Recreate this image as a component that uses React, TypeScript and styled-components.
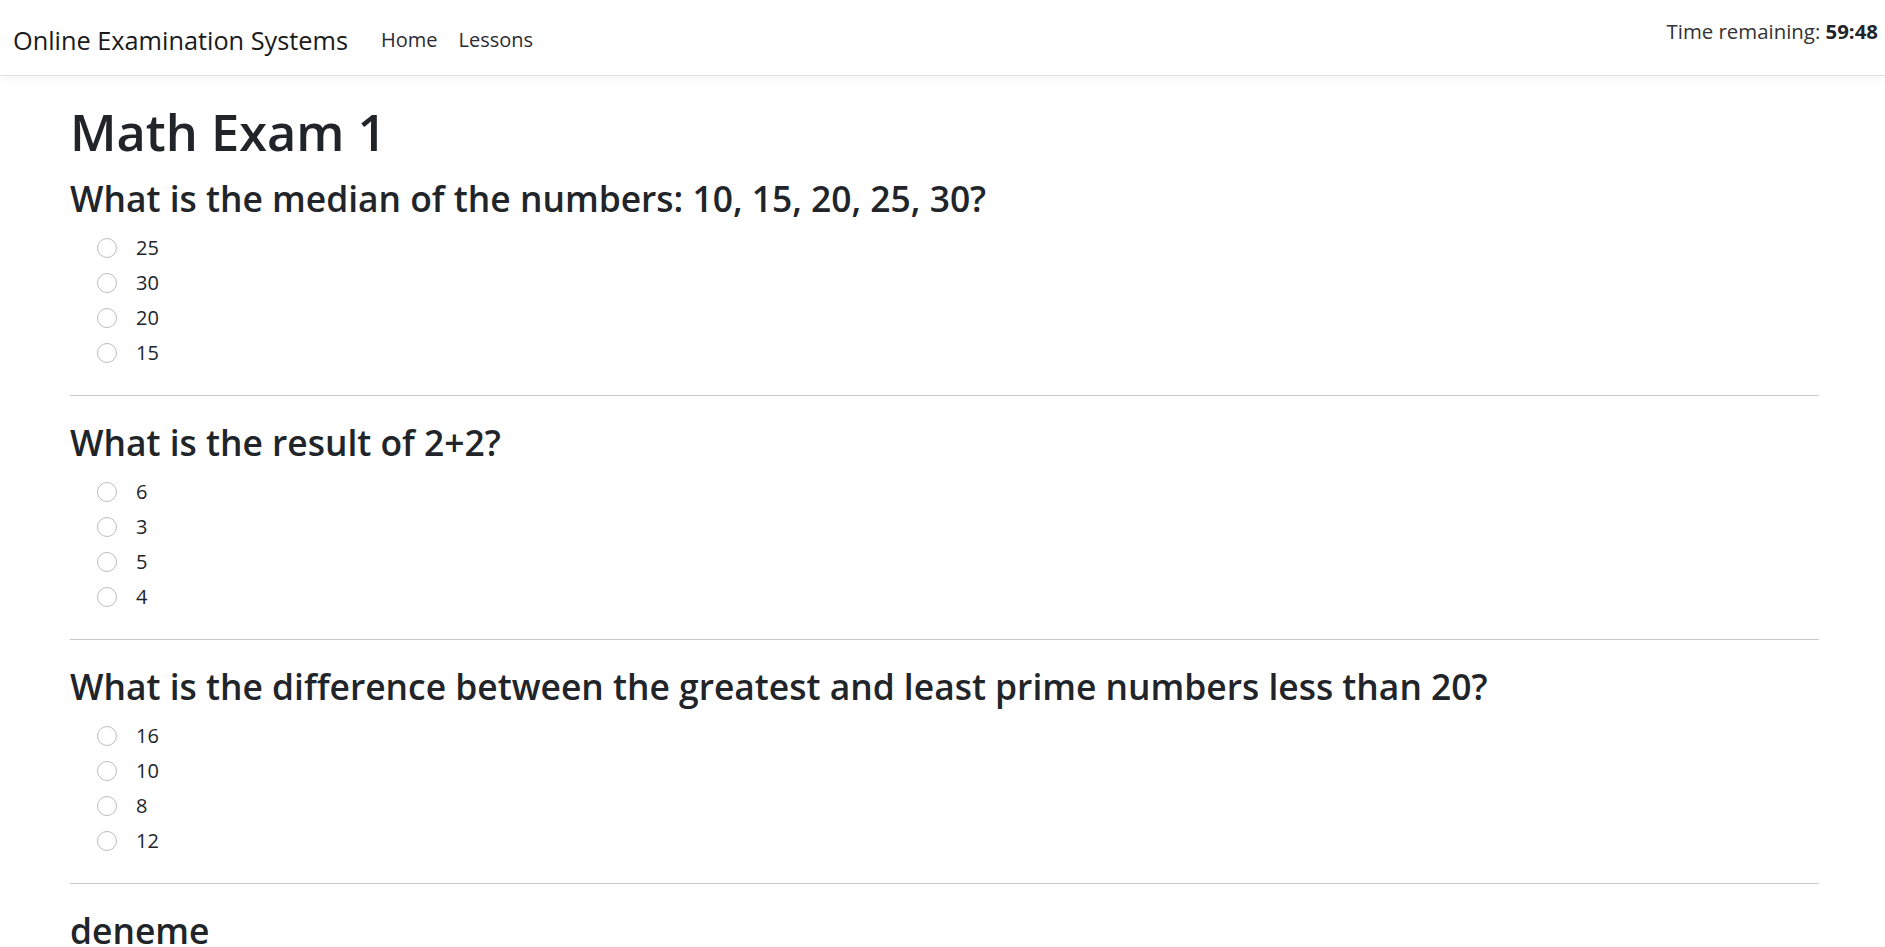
import { createGlobalStyle, styled } from 'styled-components';

const GlobalStyle = createGlobalStyle`
  body {
    margin: 0;
    background: #fff;
    color: #212529;
    font-family: "Segoe UI", "Open Sans", "Noto Sans", sans-serif;
  }
`;

const Navbar = styled.nav`
  display: flex;
  align-items: center;
  height: 76px;
  padding: 4px 7px 0 13px;
  background: #fff;
  border-bottom: 1px solid #dfe1e6;
  box-shadow: 0 2px 10px rgba(0, 0, 0, 0.05);
  box-sizing: border-box;
`;

const Brand = styled.a`
  font-size: 25.3px;
  color: #1a1a1a;
  text-decoration: none;
  margin-right: 33px;
`;

const NavLinks = styled.div`
  display: flex;
  gap: 21px;
`;

const NavLink = styled.a`
  font-size: 20px;
  color: #2b2b33;
  text-decoration: none;
`;

const Timer = styled.div`
  margin-left: auto;
  align-self: flex-start;
  margin-top: 13px;
  font-size: 20.4px;
  color: #333;

  strong {
    color: #212529;
    font-weight: 700;
  }
`;

const Main = styled.main`
  padding: 27px 66px 0 70px;
`;

const Title = styled.h1`
  margin: 0 0 17px;
  font-size: 50.5px;
  font-weight: 600;
  line-height: 58px;
`;

const Question = styled.section`
  & + & {
    margin-top: 26px;
  }
`;

const QuestionText = styled.h3`
  margin: 0;
  font-size: 35.4px;
  font-weight: 600;
  line-height: 40px;
`;

const Options = styled.div`
  display: flex;
  flex-direction: column;
  margin-top: 12px;
  padding-left: 27px;
`;

const Option = styled.label`
  display: flex;
  align-items: center;
  height: 35px;
  font-size: 20px;
  color: #212529;
`;

const Radio = styled.input`
  appearance: none;
  width: 20px;
  height: 20px;
  margin: 0 19px 0 0;
  border: 1px solid #bcbcbc;
  border-radius: 50%;
  background: #fff;
  box-sizing: border-box;
`;

const Divider = styled.hr`
  margin: 25px 0 0;
  border: 0;
  border-top: 1px solid #c8c9ca;
`;

const questions = [
  {
    id: 1,
    text: 'What is the median of the numbers: 10, 15, 20, 25, 30?',
    options: ['25', '30', '20', '15'],
  },
  { id: 2, text: 'What is the result of 2+2?', options: ['6', '3', '5', '4'] },
  {
    id: 3,
    text: 'What is the difference between the greatest and least prime numbers less than 20?',
    options: ['16', '10', '8', '12'],
  },
  { id: 4, text: 'deneme', options: [] as string[] },
];

const App = () => {
  return (
    <>
      <GlobalStyle />
      <Navbar>
        <Brand href="#">Online Examination Systems</Brand>
        <NavLinks>
          <NavLink href="#">Home</NavLink>
          <NavLink href="#">Lessons</NavLink>
        </NavLinks>
        <Timer>
          Time remaining: <strong>59:48</strong>
        </Timer>
      </Navbar>
      <Main>
        <Title>Math Exam 1</Title>
        {questions.map((q) => (
          <Question key={q.id}>
            <QuestionText>{q.text}</QuestionText>
            {q.options.length > 0 && (
              <>
                <Options>
                  {q.options.map((o) => (
                    <Option key={o}>
                      <Radio type="radio" name={`q${q.id}`} />
                      {o}
                    </Option>
                  ))}
                </Options>
                <Divider />
              </>
            )}
          </Question>
        ))}
      </Main>
    </>
  );
};

export default App;
